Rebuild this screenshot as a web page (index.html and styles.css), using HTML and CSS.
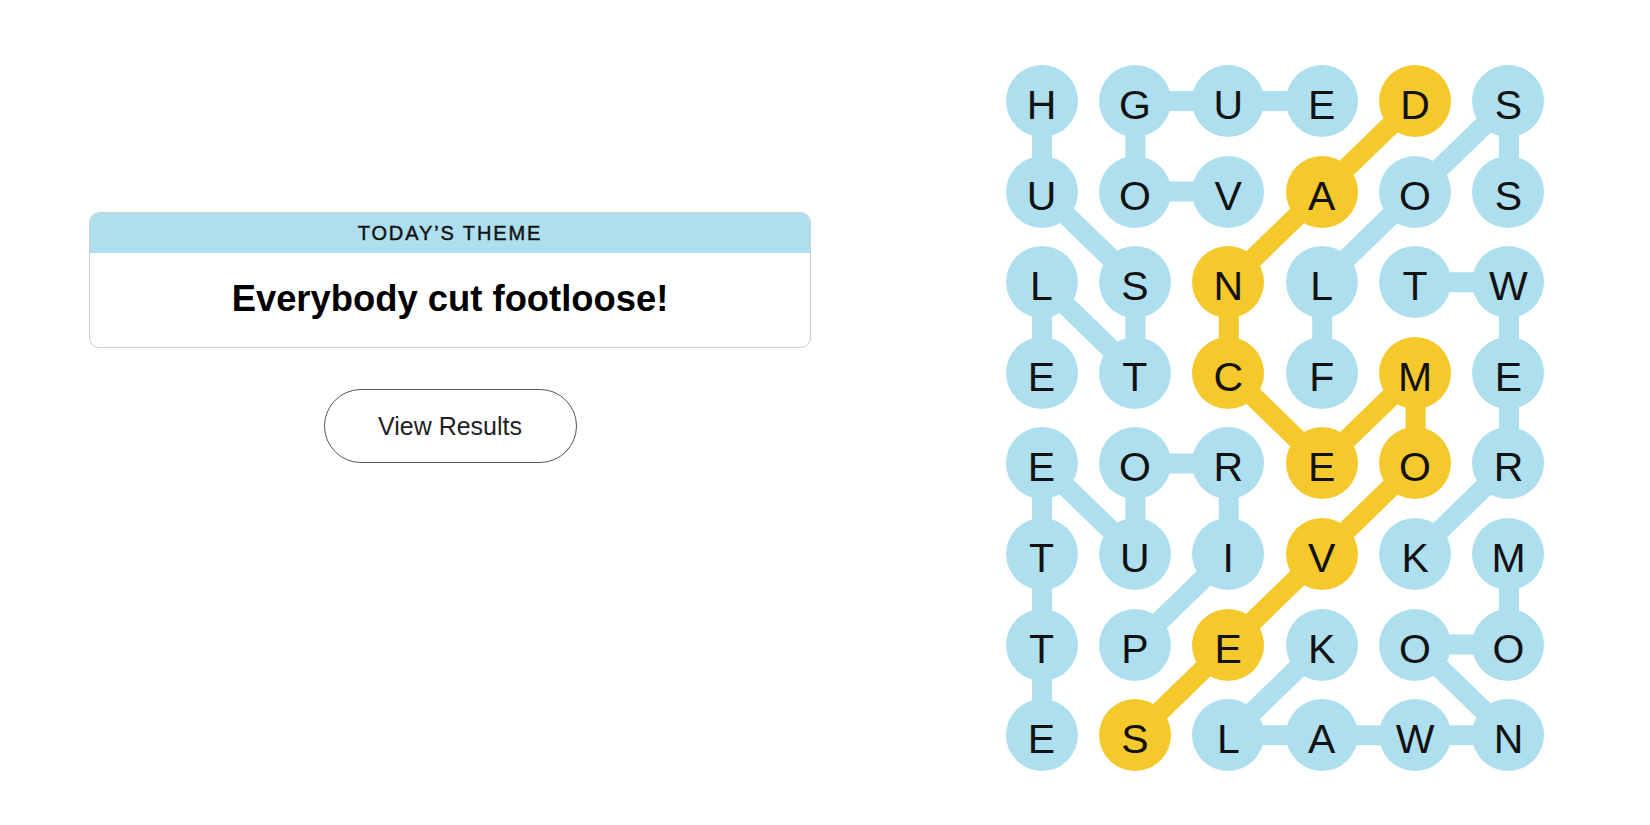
FILE: index.html
```html
<!DOCTYPE html>
<html lang="en">
<head>
<meta charset="utf-8">
<title>Strands</title>
<link rel="stylesheet" href="styles.css">
</head>
<body>
<main class="page">
  <section class="info">
    <div class="theme-card">
      <div class="theme-header">TODAY’S THEME</div>
      <div class="theme-body">Everybody cut footloose!</div>
    </div>
    <button class="results-btn" type="button">View Results</button>
  </section>
  <section class="board-wrap">
    <div class="board">
      <svg class="links" width="539" height="706" viewBox="0 0 539 706" aria-hidden="true">
        <g class="blue">
          <!-- HUSTLE -->
          <line x1="36" y1="36" x2="36" y2="126.6"/>
          <line x1="36" y1="126.6" x2="129.4" y2="217.2"/>
          <line x1="129.4" y1="217.2" x2="129.4" y2="307.8"/>
          <line x1="129.4" y1="307.8" x2="36" y2="217.2"/>
          <line x1="36" y1="217.2" x2="36" y2="307.8"/>
          <!-- VOGUE -->
          <line x1="222.8" y1="126.6" x2="129.4" y2="126.6"/>
          <line x1="129.4" y1="126.6" x2="129.4" y2="36"/>
          <line x1="129.4" y1="36" x2="222.8" y2="36"/>
          <line x1="222.8" y1="36" x2="316.2" y2="36"/>
          <!-- FLOSS -->
          <line x1="316.2" y1="307.8" x2="316.2" y2="217.2"/>
          <line x1="316.2" y1="217.2" x2="409.6" y2="126.6"/>
          <line x1="409.6" y1="126.6" x2="503" y2="36"/>
          <line x1="503" y1="36" x2="503" y2="126.6"/>
          <!-- TWERK -->
          <line x1="409.6" y1="217.2" x2="503" y2="217.2"/>
          <line x1="503" y1="217.2" x2="503" y2="398.4"/>
          <line x1="503" y1="398.4" x2="409.6" y2="489"/>
          <!-- PIROUETTE -->
          <line x1="129.4" y1="579.6" x2="222.8" y2="489"/>
          <line x1="222.8" y1="489" x2="222.8" y2="398.4"/>
          <line x1="222.8" y1="398.4" x2="129.4" y2="398.4"/>
          <line x1="129.4" y1="398.4" x2="129.4" y2="489"/>
          <line x1="129.4" y1="489" x2="36" y2="398.4"/>
          <line x1="36" y1="398.4" x2="36" y2="670.2"/>
          <!-- MOONWALK -->
          <line x1="503" y1="489" x2="503" y2="579.6"/>
          <line x1="503" y1="579.6" x2="409.6" y2="579.6"/>
          <line x1="409.6" y1="579.6" x2="503" y2="670.2"/>
          <line x1="503" y1="670.2" x2="222.8" y2="670.2"/>
          <line x1="222.8" y1="670.2" x2="316.2" y2="579.6"/>
        </g>
        <polyline class="gold" points="409.6,36 316.2,126.6 222.8,217.2 222.8,307.8 316.2,398.4 409.6,307.8 409.6,398.4 316.2,489 222.8,579.6 129.4,670.2"/>
      </svg>
      <div class="grid">
        <span class="cell">H</span><span class="cell">G</span><span class="cell">U</span><span class="cell">E</span><span class="cell span">D</span><span class="cell">S</span>
        <span class="cell">U</span><span class="cell">O</span><span class="cell">V</span><span class="cell span">A</span><span class="cell">O</span><span class="cell">S</span>
        <span class="cell">L</span><span class="cell">S</span><span class="cell span">N</span><span class="cell">L</span><span class="cell">T</span><span class="cell">W</span>
        <span class="cell">E</span><span class="cell">T</span><span class="cell span">C</span><span class="cell">F</span><span class="cell span">M</span><span class="cell">E</span>
        <span class="cell">E</span><span class="cell">O</span><span class="cell">R</span><span class="cell span">E</span><span class="cell span">O</span><span class="cell">R</span>
        <span class="cell">T</span><span class="cell">U</span><span class="cell">I</span><span class="cell span">V</span><span class="cell">K</span><span class="cell">M</span>
        <span class="cell">T</span><span class="cell">P</span><span class="cell span">E</span><span class="cell">K</span><span class="cell">O</span><span class="cell">O</span>
        <span class="cell">E</span><span class="cell span">S</span><span class="cell">L</span><span class="cell">A</span><span class="cell">W</span><span class="cell">N</span>
      </div>
    </div>
  </section>
</main>
</body>
</html>
```
FILE: styles.css
```css
* { box-sizing: border-box; }

html, body {
  margin: 0;
  padding: 0;
  background: #ffffff;
}

body {
  font-family: "Liberation Sans", Arial, sans-serif;
  color: #121212;
}

.page {
  display: flex;
  width: 1650px;
  height: 825px;
}

.info {
  width: 900px;
  display: flex;
  flex-direction: column;
  align-items: center;
  padding-top: 212px;
}

.theme-card {
  width: 722px;
  border: 1px solid #cfcfcf;
  border-radius: 10px;
  overflow: hidden;
  background: #fff;
}

.theme-header {
  height: 40px;
  background: #aedfee;
  display: flex;
  align-items: center;
  justify-content: center;
  font-size: 20px;
  letter-spacing: 1.9px;
  color: #121212;
  -webkit-text-stroke: 0.45px #121212;
  padding-top: 0;
}

.theme-body {
  height: 94px;
  display: flex;
  align-items: center;
  justify-content: center;
  font-size: 36.4px;
  font-weight: 700;
  color: #000;
  padding-bottom: 2px;
}

.results-btn {
  margin-top: 41px;
  width: 253px;
  height: 74px;
  border: 1px solid #555;
  border-radius: 37px;
  background: #fff;
  font-family: "Liberation Sans", Arial, sans-serif;
  font-size: 25px;
  color: #222;
  padding: 0;
}

.board-wrap {
  flex: 1;
  display: flex;
  justify-content: center;
  padding-top: 65px;
}

.board {
  position: relative;
  width: 539px;
  height: 706px;
}

.links {
  position: absolute;
  left: 0;
  top: 0;
}

.links .blue line {
  stroke: #aedfee;
  stroke-width: 20;
  stroke-linecap: round;
}

.links .gold {
  fill: none;
  stroke: #f5c82c;
  stroke-width: 20;
  stroke-linejoin: round;
  stroke-linecap: round;
}

.grid {
  position: relative;
  display: grid;
  grid-template-columns: repeat(6, 72px);
  grid-template-rows: repeat(8, 72px);
  column-gap: 21.4px;
  row-gap: 18.6px;
}

.cell {
  width: 72px;
  height: 72px;
  border-radius: 50%;
  background: #aedfee;
  display: flex;
  align-items: center;
  justify-content: center;
  font-size: 41px;
  color: #121212;
  line-height: 1;
  padding-top: 9px;
}

.cell.span {
  background: #f5c82c;
}
```
